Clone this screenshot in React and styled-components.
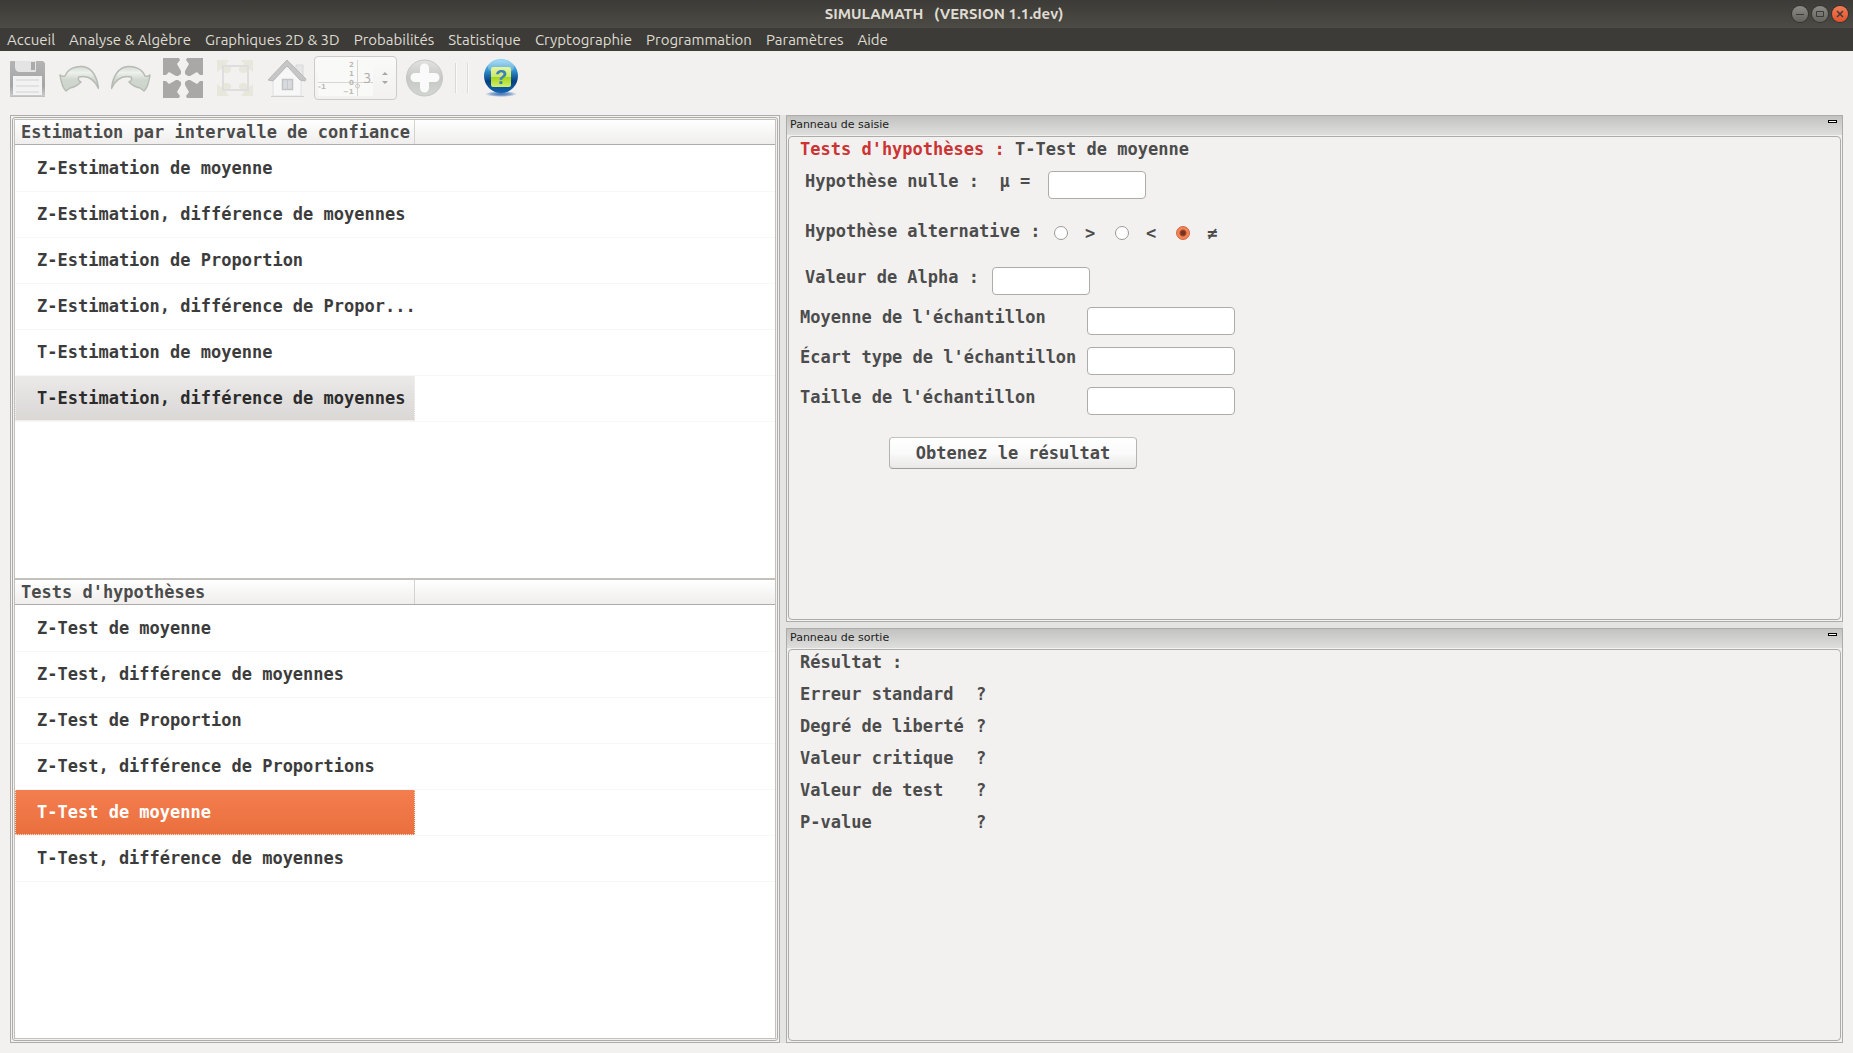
import React, { useState } from "react";
import styled, { createGlobalStyle } from "styled-components";

const MONO = '"DejaVu Sans Mono", "Liberation Mono", monospace';
const UI = 'Ubuntu, "Noto Sans", "Open Sans", sans-serif';
const INK = "#4c4c4c";
const LINE = "#aeaca8";

const Global = createGlobalStyle`
  *, *::before, *::after { box-sizing: border-box; }
  html, body, #root { height: 100%; }
  body { margin: 0; background: #f2f1f0; }
  button, input { font: inherit; color: inherit; }
`;

const Window = styled.div`
  display: flex;
  flex-direction: column;
  min-height: 100%;
  background: #f2f1f0;
  font: bold 17px/20px ${MONO};
  color: ${INK};
`;

const TitleBar = styled.header`
  display: flex;
  align-items: center;
  height: 28px;
  padding: 0 5px 0 96px;
  background: linear-gradient(#3c3b37, #3f3e39 20%, #4d4b45);
  color: #dfdbd2;
`;

const Title = styled.h1`
  flex: 1;
  margin: 0;
  text-align: center;
  white-space: pre;
  font: bold 15px/20px ${UI};
`;

const WindowButtons = styled.div`
  display: flex;
  gap: 4px;
`;

const WindowButton = styled.button`
  width: 16px;
  height: 16px;
  padding: 0;
  border: 0;
  border-radius: 8px;
  background: ${(p) =>
    p.$close ? "linear-gradient(#f37c55, #e4522a)" : "linear-gradient(#8d8b85, #65635d)"};
  color: #3c3b37;
  box-shadow: 0 0 0 1px #35342f;
  svg { display: block; }
`;

const MenuBar = styled.nav`
  display: flex;
  gap: 14px;
  height: 23px;
  padding: 0 7px;
  background: #3c3b37;
`;

const MenuLink = styled.a`
  color: #dfdbd2;
  font: 15px/24px ${UI};
  text-decoration: none;
  white-space: nowrap;
`;

const ToolBar = styled.div`
  display: flex;
  align-items: center;
  height: 54px;
  margin-bottom: 10px;
  padding-left: 1px;
`;

const Tool = styled.button`
  display: grid;
  place-items: center;
  width: 52px;
  height: 44px;
  padding: 0;
  border: 0;
  background: none;
`;

const Separator = styled.span`
  width: 2px;
  height: 30px;
  margin: 0 5px;
  border-left: 1px solid #dcdad8;
  border-right: 1px solid #fafafa;
`;

const SpinBox = styled.label`
  position: relative;
  display: flex;
  align-items: center;
  width: 83px;
  height: 44px;
  margin: 0 1px;
  padding-left: 48px;
  border: 1px solid #cdcbc8;
  border-radius: 4px;
  background: linear-gradient(#fafafa, #f2f1f0);
`;

const AxesDrawing = styled.svg`
  position: absolute;
  left: 2px;
  top: 2px;
`;

const SpinInput = styled.input`
  position: relative;
  width: 19px;
  padding: 0;
  border: 0;
  background: none;
  color: #b3afaa;
  font: 15px/20px ${UI};
`;

const Workspace = styled.main`
  flex: 1;
  display: flex;
  padding: 0 10px 10px;
`;

const ListFrame = styled.section`
  flex: 766 1 0;
  display: flex;
  min-width: 0;
  padding: 1px;
  border: 1px solid ${LINE};
`;

const ListFrameInner = styled.div`
  flex: 1;
  display: flex;
  flex-direction: column;
  min-width: 0;
  padding: 1px;
  border: 1px solid ${LINE};
  border-radius: 3px;
`;

const Tree = styled.div`
  flex: 1;
  border: 1px solid #c4c1bd;
  background: #fff;
`;

const TreeHeader = styled.h2`
  display: flex;
  height: 25px;
  margin: 0 0 1px;
  border-bottom: 1px solid ${LINE};
  background: linear-gradient(#fff, #efeeed);
  font: inherit;
`;

const TreeHeaderCell = styled.span`
  width: 400px;
  max-width: 60%;
  padding: 2px 6px;
  border-right: 1px solid #d5d3d1;
  line-height: 20px;
  white-space: nowrap;
`;

const TreeList = styled.ul`
  margin: 0;
  padding: 0;
  list-style: none;
`;

const TreeItem = styled.li`
  height: 46px;
  border-bottom: 1px solid #f7f7f7;
`;

const tones = {
  plain: "background: none; color: #3c3c3c; border-color: transparent;",
  muted: "background: linear-gradient(#ebeae9, #dad7d5); color: #2c2c2c; border-color: #f4f3f2;",
  active: "background: linear-gradient(#f47e4f, #ea6f3e); color: #fff; border-color: #fbd9ca;",
};

const TreeButton = styled.button`
  display: block;
  width: 400px;
  height: 45px;
  padding: 0 0 0 21px;
  border: 1px dotted;
  border-top: 0;
  background-clip: border-box;
  text-align: left;
  white-space: nowrap;
  ${(p) => tones[p.$tone]}
`;

const Handle = styled.div`
  flex: 0 0 6px;
  background: #e4e4e2;
`;

const Docks = styled.div`
  flex: 1057 1 0;
  display: flex;
  flex-direction: column;
  min-width: 0;
`;

const Dock = styled.section`
  flex: ${(p) => p.$share} 1 0;
  display: flex;
  flex-direction: column;
  padding: 0 1px 1px;
  border: 1px solid ${LINE};
`;

const DockTitle = styled.header`
  display: flex;
  justify-content: space-between;
  height: 19px;
  margin: 0 -1px 1px;
  padding: 0 5px 0 3px;
  background: linear-gradient(#c2c2c0, #dededc);
  color: #1c1c1c;
  font: 11px/17px "DejaVu Sans", sans-serif;
`;

const DockName = styled.h2`
  margin: 0;
  font: inherit;
`;

const DockButton = styled.button`
  width: 9px;
  height: 3px;
  margin-top: 4px;
  padding: 0;
  border: 1px solid #000;
  background: #fff;
`;

const DockBody = styled.div`
  flex: 1;
  padding: 2px 11px;
  border: 1px solid ${LINE};
  border-radius: 4px;
`;

const Heading = styled.p`
  margin: 0 0 12px;
`;

const Accent = styled.span`
  color: #cc3333;
`;

const FormRow = styled.div`
  display: flex;
  align-items: flex-start;
  margin: 0 0 ${(p) => (p.$loose ? 22 : 12)}px ${(p) => (p.$indent ? 5 : 0)}px;
`;

const FieldLabel = styled.label`
  width: ${(p) => p.$width}px;
  white-space: pre;
`;

const TextInput = styled.input`
  width: ${(p) => (p.$wide ? 148 : 98)}px;
  height: 28px;
  padding: 0 5px;
  border: 1px solid ${LINE};
  border-radius: 4px;
  background: #fff;
`;

const Choices = styled.fieldset`
  display: flex;
  margin: 0 0 22px 5px;
  padding: 0;
  border: 0;
`;

const ChoicesLegend = styled.legend`
  float: left;
  width: 249px;
  padding: 0;
`;

const Choice = styled.label`
  display: flex;
  align-items: center;
  gap: 17px;
  width: 61px;
  height: 24px;
`;

const Radio = styled.input`
  appearance: none;
  width: 14px;
  height: 14px;
  margin: 0;
  border: 1px solid #9c9a96;
  border-radius: 50%;
  background: #fff;
  &:checked {
    border-color: #d0653c;
    background: radial-gradient(circle, #6e3520 0 2px, #a84e2c 3px, #f58356 4px 7px);
  }
`;

const SubmitButton = styled.button`
  display: block;
  width: 248px;
  height: 32px;
  margin: 22px 0 0 89px;
  padding: 0;
  border: 1px solid;
  border-color: #c4c2bf #b5b3af #a09e9a;
  border-radius: 4px;
  background: linear-gradient(#fff, #fafafa 50%, #e9e8e7);
`;

const Results = styled.table`
  border-collapse: collapse;
  th, td { padding: 0 0 12px; font: inherit; text-align: left; }
  th { width: 176px; }
`;

const Svg = ({ size = 40, children }) => (
  <svg width={size} height={size} viewBox={`0 0 ${size} ${size}`} aria-hidden="true">
    {children}
  </svg>
);

const SaveIcon = () => (
  <Svg>
    <defs>
      <linearGradient id="floppy" x2="0" y2="1">
        <stop stopColor="#b4b4b4" /><stop offset=".7" stopColor="#a4a5a4" /><stop offset="1" stopColor="#cfcfcf" />
      </linearGradient>
    </defs>
    <path d="M3 4q0-1 1-1h32l2 2v33q0 1-1 1H4q-1 0-1-1z" fill="url(#floppy)" />
    <path d="M8 3h21v10q0 1-1 1H13q-5 0-5-5z" fill="#e4e4e4" />
    <path d="M24 4h4v8h-4z" fill="#ababab" />
    <path d="M6 18h29v19H6z" fill="#f2f2f2" />
    <path d="M9 22h23M9 28h23M9 34h23" stroke="#d2d2d2" />
    <path d="M3 38.500h35" stroke="#c0c0c0" />
  </Svg>
);

const ArrowIcon = ({ flip }) => (
  <Svg>
    <defs>
      <linearGradient id={flip ? "bendR" : "bendL"} x2="0" y2="1">
        <stop stopColor="#d3d9d1" /><stop offset=".25" stopColor="#eef1ed" />
        <stop offset=".55" stopColor="#d0d7ce" /><stop offset="1" stopColor="#ccd4ca" />
      </linearGradient>
    </defs>
    <path
      transform={flip ? "translate(40 0) scale(-1 1)" : undefined}
      d="M1 17q2 2 5 1C9 11 16 8 23 8.500c9 .5 15 9 16.500 22C35 21 29 17 20 19q-2 3 2 5-5 5-11 6l-4 3Q3 30 1 17z"
      fill={`url(#${flip ? "bendR" : "bendL"})`}
      stroke="#b6bcb4"
      strokeWidth="1.500"
      strokeLinejoin="round"
    />
  </Svg>
);

const quarter = "M0 0h16l1 2-3 4 4 7v3l-3 2h-2L6 14l-3 3H0z";

const Corners = ({ fill, scale = 1 }) => (
  <g fill={fill}>
    {[[1, 1], [-1, 1], [1, -1], [-1, -1]].map(([x, y]) => (
      <path key={`${x}${y}`} d={quarter} transform={`translate(20 20) scale(${x * scale} ${y * scale}) translate(-20 -20)`} />
    ))}
  </g>
);

const ExpandIcon = () => <Svg><Corners fill="#a9a8a6" /></Svg>;

const FitIcon = () => (
  <Svg>
    <g fill="#e8e7dc">
      {[[1, 1], [-1, 1], [1, -1], [-1, -1]].map(([x, y]) => (
        <path
          key={`${x}${y}`}
          d="M2 2h12l-3 4 5 4v3l-3 2h-3L6 11l-4 3z"
          transform={`translate(20 20) scale(${x} ${y}) translate(-20 -20)`}
        />
      ))}
    </g>
    <rect x="8" y="8" width="25" height="24" fill="none" stroke="#dededf" strokeWidth="2" />
  </Svg>
);

const HomeIcon = () => (
  <Svg>
    <path d="M29 7h7v13l-7-6z" fill="#e6e6e6" stroke="#d8d8d8" />
    <path d="M6 21L20 6l14 15v17H6z" fill="#f7f7f7" stroke="#e0e0e0" />
    <path d="M1 22L20 2l19 19-1 2-5-1L20 8 6 23z" fill="#c6c6c6" stroke="#b9b9b9" strokeLinejoin="round" />
    <path d="M4 38.500h33" stroke="#cfcfcf" />
    <path d="M15.500 21.500h10v10h-10z" fill="#d7dade" stroke="#c3c3c3" strokeWidth="1.500" />
    <path d="M20.500 22v9" stroke="#c6c9cc" />
  </Svg>
);

const PlusIcon = () => (
  <Svg>
    <defs>
      <linearGradient id="disc" x2="0" y2="1">
        <stop stopColor="#e3e4e2" /><stop offset=".5" stopColor="#c6c8c5" /><stop offset="1" stopColor="#d3d5d2" />
      </linearGradient>
    </defs>
    <circle cx="20.500" cy="20" r="18" fill="url(#disc)" stroke="#c6c8c5" />
    <path d="M20.500 10v20M11 19.500h20" stroke="#fafafa" strokeWidth="9" strokeLinecap="round" />
  </Svg>
);

const HelpIcon = () => (
  <Svg>
    <defs>
      <linearGradient id="ball" x2="0" y2="1">
        <stop stopColor="#8fd6f5" /><stop offset=".35" stopColor="#2f8fcd" />
        <stop offset=".65" stopColor="#073f83" /><stop offset="1" stopColor="#1265b4" />
      </linearGradient>
      <linearGradient id="leaf" x2="0" y2="1">
        <stop stopColor="#e3f5a0" /><stop offset=".48" stopColor="#cdea6c" />
        <stop offset=".52" stopColor="#a5d61c" /><stop offset="1" stopColor="#d0f070" />
      </linearGradient>
      <radialGradient id="shade">
        <stop stopColor="#3f6fae" /><stop offset=".6" stopColor="#8aa8cf" /><stop offset="1" stopColor="#f2f1f0" />
      </radialGradient>
    </defs>
    <ellipse cx="21" cy="36" rx="16" ry="3" fill="url(#shade)" />
    <circle cx="21" cy="18" r="17" fill="url(#ball)" />
    <ellipse cx="21" cy="9" rx="13" ry="7" fill="#fff" opacity=".25" />
    <rect x="11" y="9" width="20" height="20" rx="2" fill="url(#leaf)" />
    <text x="21" y="26" textAnchor="middle" fontFamily="Liberation Sans" fontWeight="bold" fontSize="20" fill="#3a82b8">?</text>
  </Svg>
);

const Axes = () => (
  <AxesDrawing width="56" height="38" viewBox="0 0 56 38" aria-hidden="true">
    <path d="M1 1h55v36H1z" fill="#f9f9f8" />
    <path d="M40.500 1v36M1 23.500h55" stroke="#d8d6d4" fill="none" />
    <circle cx="40.500" cy="27" r="2" fill="none" stroke="#c9c7c4" />
    <g fontFamily="DejaVu Sans" fontSize="7" fill="#bcbab7">
      <text x="32" y="8">2</text>
      <text x="32" y="17">1</text>
      <text x="32" y="26">0</text>
      <text x="26" y="35">−1</text>
      <text x="1" y="30">-1</text>
    </g>
  </AxesDrawing>
);

const Steps = () => (
  <svg width="6" height="14" viewBox="0 0 6 14" aria-hidden="true">
    <path d="M0 4l3-3 3 3zM0 10l3 3 3-3z" fill="#a9a7a4" />
  </svg>
);

const MENU = [
  "Accueil", "Analyse & Algèbre", "Graphiques 2D & 3D", "Probabilités", "Statistique",
  "Cryptographie", "Programmation", "Paramètres", "Aide",
];

const TREES = [
  {
    title: "Estimation par intervalle de confiance",
    tone: "muted",
    selected: 5,
    items: [
      "Z-Estimation de moyenne",
      "Z-Estimation, différence de moyennes",
      "Z-Estimation de Proportion",
      "Z-Estimation, différence de Propor...",
      "T-Estimation de moyenne",
      "T-Estimation, différence de moyennes",
    ],
  },
  {
    title: "Tests d'hypothèses",
    tone: "active",
    selected: 4,
    items: [
      "Z-Test de moyenne",
      "Z-Test, différence de moyennes",
      "Z-Test de Proportion",
      "Z-Test, différence de Proportions",
      "T-Test de moyenne",
      "T-Test, différence de moyennes",
    ],
  },
];

const SAMPLE = [
  ["mean", "Moyenne de l'échantillon"],
  ["sd", "Écart type de l'échantillon"],
  ["size", "Taille de l'échantillon"],
];

const RESULTS = ["Erreur standard", "Degré de liberté", "Valeur critique", "Valeur de test", "P-value"];

function DockPanel({ title, share, children }) {
  return (
    <Dock $share={share}>
      <DockTitle>
        <DockName>{title}</DockName>
        <DockButton type="button" aria-label="Réduire" />
      </DockTitle>
      <DockBody>{children}</DockBody>
    </Dock>
  );
}

export default function App() {
  const [alternative, setAlternative] = useState("≠");
  return (
    <Window>
      <Global />
      <TitleBar>
        <Title>{"SIMULAMATH   (VERSION 1.1.dev)"}</Title>
        <WindowButtons>
          <WindowButton type="button" aria-label="Réduire">
            <Svg size={16}><path d="M4 8.500h8" stroke="currentColor" /></Svg>
          </WindowButton>
          <WindowButton type="button" aria-label="Agrandir">
            <Svg size={16}><path d="M4.500 5.500h7v5h-7z" fill="none" stroke="currentColor" /></Svg>
          </WindowButton>
          <WindowButton type="button" aria-label="Fermer" $close>
            <Svg size={16}><path d="M5 5l6 6M11 5l-6 6" stroke="currentColor" strokeWidth="1.500" /></Svg>
          </WindowButton>
        </WindowButtons>
      </TitleBar>
      <MenuBar>
        {MENU.map((name) => <MenuLink key={name} href="#">{name}</MenuLink>)}
      </MenuBar>
      <ToolBar>
        <Tool type="button" aria-label="Enregistrer"><SaveIcon /></Tool>
        <Tool type="button" aria-label="Annuler"><ArrowIcon /></Tool>
        <Tool type="button" aria-label="Rétablir"><ArrowIcon flip /></Tool>
        <Tool type="button" aria-label="Plein écran"><ExpandIcon /></Tool>
        <Tool type="button" aria-label="Ajuster"><FitIcon /></Tool>
        <Tool type="button" aria-label="Vue initiale"><HomeIcon /></Tool>
        <SpinBox>
          <Axes />
          <SpinInput type="text" defaultValue="3" aria-label="Graduation" />
          <Steps />
        </SpinBox>
        <Tool type="button" aria-label="Ajouter"><PlusIcon /></Tool>
        <Separator />
        <Separator />
        <Tool type="button" aria-label="Aide"><HelpIcon /></Tool>
      </ToolBar>
      <Workspace>
        <ListFrame>
          <ListFrameInner>
            {TREES.map((tree) => (
              <Tree key={tree.title}>
                <TreeHeader><TreeHeaderCell>{tree.title}</TreeHeaderCell></TreeHeader>
                <TreeList>
                  {tree.items.map((item, i) => (
                    <TreeItem key={item}>
                      <TreeButton type="button" $tone={i === tree.selected ? tree.tone : "plain"}>{item}</TreeButton>
                    </TreeItem>
                  ))}
                </TreeList>
              </Tree>
            ))}
          </ListFrameInner>
        </ListFrame>
        <Handle />
        <Docks>
          <DockPanel title="Panneau de saisie" share={507}>
            <Heading><Accent>Tests d'hypothèses :</Accent> T-Test de moyenne</Heading>
            <FormRow $indent $loose>
              <FieldLabel htmlFor="mu" $width={243}>{"Hypothèse nulle :  μ ="}</FieldLabel>
              <TextInput id="mu" type="text" />
            </FormRow>
            <Choices>
              <ChoicesLegend>Hypothèse alternative :</ChoicesLegend>
              {[">", "<", "≠"].map((sign) => (
                <Choice key={sign}>
                  <Radio
                    type="radio"
                    name="alternative"
                    checked={alternative === sign}
                    onChange={() => setAlternative(sign)}
                  />
                  {sign}
                </Choice>
              ))}
            </Choices>
            <FormRow $indent>
              <FieldLabel htmlFor="alpha" $width={187}>Valeur de Alpha :</FieldLabel>
              <TextInput id="alpha" type="text" />
            </FormRow>
            {SAMPLE.map(([id, label]) => (
              <FormRow key={id}>
                <FieldLabel htmlFor={id} $width={287}>{label}</FieldLabel>
                <TextInput id={id} type="text" $wide />
              </FormRow>
            ))}
            <SubmitButton type="button">Obtenez le résultat</SubmitButton>
          </DockPanel>
          <Handle />
          <DockPanel title="Panneau de sortie" share={415}>
            <Heading>Résultat :</Heading>
            <Results>
              <tbody>
                {RESULTS.map((name) => (
                  <tr key={name}><th scope="row">{name}</th><td>?</td></tr>
                ))}
              </tbody>
            </Results>
          </DockPanel>
        </Docks>
      </Workspace>
    </Window>
  );
}
